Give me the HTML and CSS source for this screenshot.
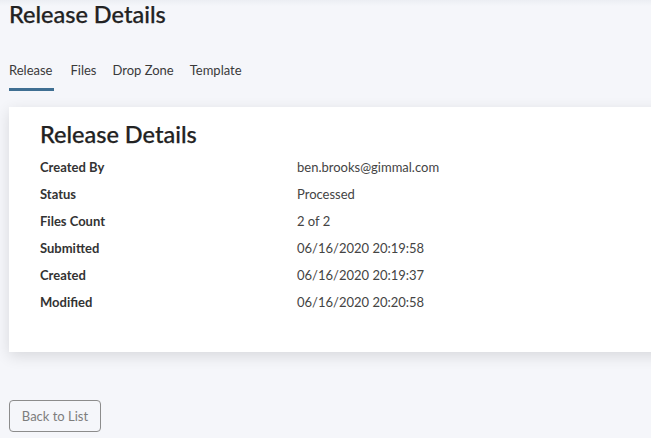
FILE: index.html
```html
<!DOCTYPE html>
<html lang="en">

<head>
    <meta charset="UTF-8">
    <meta name="viewport" content="width=device-width, initial-scale=1.0">
    <title>Release Details</title>
    <link rel="stylesheet" href="styles.css">
</head>

<body>
    <h1 class="page-title">Release Details</h1>

    <nav class="tabs">
        <a class="tab active" href="#">Release</a>
        <a class="tab" href="#">Files</a>
        <a class="tab" href="#">Drop Zone</a>
        <a class="tab" href="#">Template</a>
    </nav>

    <section class="card">
        <h2 class="card-title">Release Details</h2>
        <dl class="details">
            <dt>Created By</dt>
            <dd>ben.brooks@gimmal.com</dd>
            <dt>Status</dt>
            <dd>Processed</dd>
            <dt>Files Count</dt>
            <dd>2 of 2</dd>
            <dt>Submitted</dt>
            <dd>06/16/2020 20:19:58</dd>
            <dt>Created</dt>
            <dd>06/16/2020 20:19:37</dd>
            <dt>Modified</dt>
            <dd>06/16/2020 20:20:58</dd>
        </dl>
    </section>

    <button class="back-btn">Back to List</button>
</body>

</html>
```

FILE: styles.css
```css
html {
    overflow: hidden;
}

body {
    margin: 0;
    padding: 0 9px;
    min-height: 438px;
    background: linear-gradient(#eceef3, #f5f6fa 6px) #f5f6fa;
    font-family: Lato, "Open Sans", Arial, sans-serif;
    color: #333;
}

.page-title {
    margin: 0;
    font-size: 23.5px;
    line-height: 29px;
    font-weight: 500;
    color: #222;
    -webkit-text-stroke: 0.25px #222;
}

.tabs {
    display: flex;
    gap: 16px;
    margin-top: 23px;
}

.tab {
    padding: 8px 0;
    font-size: 13px;
    line-height: 20px;
    color: #3a3a3a;
    text-decoration: none;
    border-bottom: 3px solid transparent;
}

.tab.active {
    padding-right: 2px;
    border-bottom-color: #3f6f92;
}

.card {
    margin: 16px -40px 0 0;
    padding: 13px 31px 36px;
    background-color: #fff;
    box-shadow: 0 4px 14px rgba(0, 0, 0, 0.12);
}

.card-title {
    margin: 0 0 5px;
    font-size: 23.5px;
    line-height: 29px;
    font-weight: 500;
    color: #222;
    -webkit-text-stroke: 0.25px #222;
}

.details {
    display: grid;
    grid-template-columns: 257px 1fr;
    grid-auto-rows: 27px;
    align-items: center;
    margin: 0;
    font-size: 13px;
    line-height: 27px;
}

.details dt {
    font-weight: 700;
    color: #333;
}

.details dd {
    margin: 0;
    color: #444;
}

.back-btn {
    display: block;
    margin-top: 48px;
    width: 92px;
    height: 32px;
    padding: 0;
    background: transparent;
    border: 1px solid #8c8c8c;
    border-radius: 4px;
    font-family: inherit;
    font-size: 13px;
    color: #7d7d7d;
}
```
